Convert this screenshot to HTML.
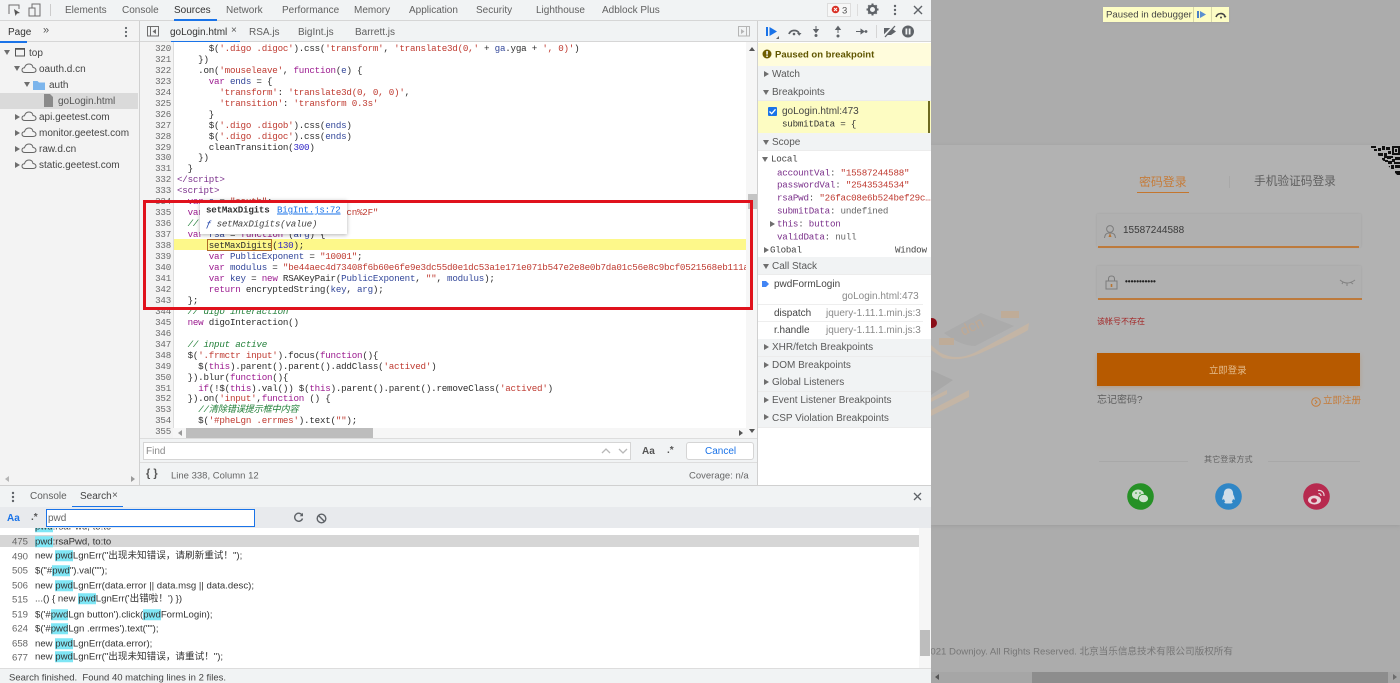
<!DOCTYPE html>
<html><head><meta charset="utf-8"><style>
html,body{margin:0;padding:0;width:1400px;height:683px;overflow:hidden;background:#acacac;font-family:"Liberation Sans","Noto Sans CJK SC",sans-serif;font-size:10px;color:#5a5a5a}
.a{position:absolute}
.t{position:absolute;white-space:nowrap;transform:translateY(calc(-50% + 1px));line-height:1.2}
.m{font-family:"Liberation Mono","Noto Sans CJK SC",monospace;font-size:9.2px;letter-spacing:-.22px}
.t.m{transform:translateY(-50%)}
.code{position:absolute;left:177px;top:33px;white-space:pre;line-height:10.96px;color:#2d2d2d}
.gut{position:absolute;left:140px;width:31px;top:33px;text-align:right;white-space:pre;line-height:10.96px;color:#6a6a6a}
.k{color:#9b1a8f}.s{color:#bf3a30}.v{color:#33479a}.n{color:#2a1fc4}.c{color:#23803a;font-style:italic}.g{color:#7a2f8a}
.tab{font-size:10px;color:#616161}
.h{position:absolute;left:758px;width:173px;background:#f1f3f4;height:17px;border-bottom:1px solid #ececec}
.ar{position:absolute;width:0;height:0;border-left:3px solid transparent;border-right:3px solid transparent;border-top:5px solid #6e6e6e}
.ar2{position:absolute;width:0;height:0;border-top:3px solid transparent;border-bottom:3px solid transparent;border-left:5px solid #6e6e6e}
mark{background:#7fe6f5;color:inherit}
.r{font-size:9.6px;color:#333}
.cj{letter-spacing:-.1px}
</style></head><body>

<!-- page behind -->
<div class="a" style="left:931px;top:0;width:469px;height:683px;background:#acacac;overflow:hidden">
 <div class="a" style="left:0;top:145px;width:469px;height:380px;background:#b2b2b2;box-shadow:0 1px 4px #9c9c9c"></div>
 <svg class="a" style="left:0;top:290px" width="110" height="140" viewBox="0 0 110 140">
  <path d="M0 55L8 62Q25 72 45 62L98 33L97 40Q90 45 50 63Q30 72 12 68L0 60Z" fill="#c4b5a5"/>
  <path d="M13 43L50 23L83 36L44 56Q30 56 13 43Z" fill="#ababab"/>
  <text x="32" y="46" transform="rotate(-25 32 46)" font-size="15" fill="#bfa994" font-family="Liberation Sans">dcn</text>
  <rect x="70" y="21" width="18" height="7" fill="#bfac98"/>
  <rect x="8" y="48" width="15" height="7" fill="#bfac98"/>
  <circle cx="1" cy="33" r="5" fill="#8a0e18"/>
  <path d="M0 80L22 90L0 105Z" fill="#a8a8a8"/>
  <path d="M0 108L16 100V104L0 112ZM0 120L38 100V107L0 126Z" fill="#c4b5a5"/>
 </svg>
 <svg class="a" style="left:438px;top:146px" width="31" height="32" viewBox="0 0 31 32">
  <defs><clipPath id="q"><path d="M0 0H31V32Z"/></clipPath></defs>
  <g clip-path="url(#q)" fill="#111"><rect x="0" y="0" width="31" height="32" fill="#b2b2b2"/>
  <path d="M2 0h5v2h-5zM9 2h3v3h-3zM13 0h3v4h-3zM9 7h5v3h-5zM15 7h3v5h-3zM19 5h3v3h-3zM18 10h4v3h-4zM13 12h3v3h-3zM19 15h4v3h-4zM23 13h3v3h-3zM22 19h3v4h-3zM26 19h5v3h-5zM26 25h5v4h-5zM22 25h2v2h-2zM19 20h2v2h-2zM5 3h3v2h-3zM17 1h4v3h-4zM22 10h2v2h-2zM26 11h5v3h-5zM25 16h6v2h-6zM16 14h3v2h-3z"/>
  <path d="M23 0h8v9h-8zM25 2v5h4V2z" fill-rule="evenodd"/><rect x="26" y="3" width="2" height="3"/></g>
 </svg>
 <div class="t" style="left:0;top:651px;width:302px;overflow:hidden;font-size:9.6px;color:#767676;direction:rtl;text-align:left"><span style="direction:ltr;unicode-bidi:bidi-override">2004-2021 Downjoy. All Rights Reserved. 北京当乐信息技术有限公司版权所有</span></div>
 <!-- paused -->
 <div class="a" style="left:172px;top:7px;width:126px;height:15px;background:#fdfdc4;box-shadow:0 1px 2px #a5a5a5"></div>
 <div class="t" style="left:175px;top:14px;font-size:9.6px;color:#444">Paused in debugger</div>
 <div class="a" style="left:262px;top:7px;width:1px;height:15px;background:#d8d8a8"></div>
 <div class="a" style="left:280px;top:7px;width:1px;height:15px;background:#d8d8a8"></div>
 <svg class="a" style="left:265px;top:10px" width="12" height="10"><rect x="1" y="1" width="2" height="7" fill="#4a7fc4"/><path d="M4 1L10 4.500L4 8Z" fill="#5a90d0"/></svg>
 <svg class="a" style="left:283px;top:10px" width="14" height="10" fill="none" stroke="#444" stroke-width="1.600"><path d="M2 7A5 5 0 0 1 11 6"/><path d="M9.500 6h3L11 8Z" fill="#444" stroke="none"/><circle cx="7" cy="7.500" r="1" fill="#444" stroke="none"/></svg>
 <!-- tabs -->
 <div class="t cj" style="left:208px;top:181px;font-size:12px;color:#c57c3a">密码登录</div>
 <div class="a" style="left:206px;top:192px;width:52px;height:1px;background:#c4762e"></div>
 <div class="a" style="left:298px;top:176px;width:1px;height:12px;background:#a8a8a8"></div>
 <div class="t" style="left:323px;top:181px;font-size:11.700px;color:#5f5f5f">手机验证码登录</div>
 <!-- input1 -->
 <div class="a" style="left:166px;top:214px;width:264px;height:33px;background:#b0b0b0;box-shadow:0 0 2px #a3a3a3"></div>
 <div class="a" style="left:167px;top:246px;width:261px;height:2px;background:#bd7a3c"></div>
 <svg class="a" style="left:172px;top:224px" width="14" height="15" fill="none" stroke="#7c7c7c"><circle cx="7" cy="5" r="3.400"/><path d="M1.500 14Q2 9 6 9H8Q12 9 12.500 14"/><path d="M7 9L5.500 13H8.500Z" fill="#b87430" stroke="none"/></svg>
 <div class="t" style="left:192px;top:230px;font-size:10px;color:#3a3a3a">15587244588</div>
 <!-- input2 -->
 <div class="a" style="left:166px;top:266px;width:264px;height:32px;background:#b0b0b0;box-shadow:0 0 2px #a3a3a3"></div>
 <div class="a" style="left:167px;top:298px;width:264px;height:1.500px;background:#bd7a3c"></div>
 <svg class="a" style="left:174px;top:275px" width="13" height="15" fill="none" stroke="#7c7c7c"><path d="M3.500 6V4Q3.500 1 6.500 1T9.500 4V6"/><rect x="1" y="6" width="11" height="8"/><rect x="5.700" y="9" width="1.600" height="3" fill="#b87430" stroke="none"/></svg>
 <div class="t" style="left:194px;top:281px;font-size:8px;color:#222;font-weight:bold">•••••••••••</div>
 <svg class="a" style="left:408px;top:279px" width="17" height="8" fill="none" stroke="#828282"><path d="M1 1Q8 7 16 1M4 3L3 5M8 4.500V7M12 3.500L14 5"/></svg>
 <div class="t" style="left:166px;top:321px;font-size:8px;color:#a32626">该帐号不存在</div>
 <!-- button -->
 <div class="a" style="left:166px;top:353px;width:263px;height:33px;background:#b75a00;box-shadow:0 2px 4px #b49f8a"></div>
 <div class="t" style="left:278px;top:369px;font-size:9.400px;color:#e4bc8c">立即登录</div>
 <div class="t" style="left:166px;top:400px;font-size:10px;color:#5f5f5f">忘记密码?</div>
 <svg class="a" style="left:380px;top:397px" width="10" height="10" fill="none" stroke="#c57c3a"><circle cx="5" cy="5" r="4.300"/><path d="M4 3L6 5L4 7"/></svg>
 <div class="t" style="left:392px;top:400px;font-size:9.500px;color:#c57c3a">立即注册</div>
 <!-- others -->
 <div class="a" style="left:168px;top:461px;width:89px;height:1px;background:#a8a8a8"></div>
 <div class="a" style="left:337px;top:461px;width:92px;height:1px;background:#a8a8a8"></div>
 <div class="t" style="left:273px;top:459px;font-size:8.100px;color:#656565">其它登录方式</div>
 <svg class="a" style="left:196px;top:483px" width="27" height="27"><circle cx="13.500" cy="13.500" r="13.300" fill="#269126"/><ellipse cx="11" cy="11.500" rx="6" ry="5" fill="#cfe3cf"/><ellipse cx="16.500" cy="15.500" rx="5" ry="4.200" fill="#cfe3cf" stroke="#269126" stroke-width=".8"/><circle cx="9" cy="10" r=".8" fill="#269126"/><circle cx="13" cy="10" r=".8" fill="#269126"/></svg>
 <svg class="a" style="left:284px;top:483px" width="27" height="27"><circle cx="13.500" cy="13.500" r="13.300" fill="#2f86c6"/><path d="M13.500 5.500C9.800 5.500 8.800 8.500 8.800 11.500C7.500 14 7 16 7.500 17L9 16C9.300 17.300 9.800 18 10.300 18.500C9 19 8.800 20.500 11.500 20.500H15.500C18.200 20.500 18 19 16.700 18.500C17.200 18 17.700 17.300 18 16L19.500 17C20 16 19.500 14 18.200 11.500C18.200 8.500 17.200 5.500 13.500 5.500Z" fill="#cfdde8"/></svg>
 <svg class="a" style="left:372px;top:483px" width="27" height="27"><circle cx="13.500" cy="13.500" r="13.300" fill="#b72a4f"/><ellipse cx="11.500" cy="17" rx="6.500" ry="4.500" fill="#e9d3d9"/><ellipse cx="11" cy="17.500" rx="3" ry="2.300" fill="#b72a4f"/><path d="M15 7.500A5 5 0 0 1 21 13M15.500 10.500A2.500 2.500 0 0 1 18 13" fill="none" stroke="#e9d3d9" stroke-width="1.200"/></svg>
 <!-- scrollbar -->
 <div class="a" style="left:0;top:672px;width:469px;height:11px;background:#a6a6a6"></div>
 <div class="a" style="left:101px;top:672px;width:356px;height:11px;background:#8d8d8d"></div>
 <div class="a" style="left:4px;top:674px;width:0;height:0;border:3px solid transparent;border-right:4px solid #555;border-left:0"></div>
 <div class="a" style="left:462px;top:674px;width:0;height:0;border:3px solid transparent;border-left:4px solid #6c6c6c;border-right:0"></div>
</div>

<!-- devtools -->
<div class="a" style="left:0;top:0;width:931px;height:683px;background:#fff;overflow:hidden">
 <!-- main toolbar -->
 <div class="a" style="left:0;top:0;width:931px;height:20px;background:#f1f3f4;border-bottom:1px solid #d6d6d6"></div>
 <svg class="a" style="left:7px;top:3px" width="36" height="14" fill="none" stroke="#6e6e6e"><path d="M2 11V2H12V6"/><path d="M7 6L8.500 13L10 10.500L13 10Z" fill="#555" stroke="none"/><rect x="22" y="5" width="6" height="8"/><path d="M25 5V1H33V13H28"/></svg>
 <div class="a" style="left:50px;top:4px;width:1px;height:12px;background:#ccc"></div>
 <span class="t tab" style="left:65px;top:10px">Elements</span><span class="t tab" style="left:122px;top:10px">Console</span><span class="t tab" style="left:174px;top:10px;color:#333">Sources</span><span class="t tab" style="left:226px;top:10px">Network</span><span class="t tab" style="left:282px;top:10px">Performance</span><span class="t tab" style="left:354px;top:10px">Memory</span><span class="t tab" style="left:409px;top:10px">Application</span><span class="t tab" style="left:476px;top:10px">Security</span><span class="t tab" style="left:536px;top:10px">Lighthouse</span><span class="t tab" style="left:602px;top:10px">Adblock Plus</span>
 <div class="a" style="left:174px;top:19px;width:43px;height:2px;background:#1a73e8"></div>
 <div class="a" style="left:827px;top:3px;width:24px;height:14px;border:1px solid #ddd;box-sizing:border-box;background:#f7f7f7"></div>
 <svg class="a" style="left:831px;top:5px" width="9" height="9"><circle cx="4.500" cy="4.500" r="3.800" fill="#d93025"/><path d="M3 3L6 6M6 3L3 6" stroke="#fff"/></svg>
 <span class="t" style="left:842px;top:10px;font-size:9.500px;color:#555">3</span>
 <div class="a" style="left:857px;top:4px;width:1px;height:12px;background:#ddd"></div>
 <svg class="a" style="left:866px;top:3px" width="13" height="13"><circle cx="6.500" cy="6.500" r="3.700" fill="none" stroke="#5f6368" stroke-width="2.400"/><path d="M6.500 .5V3M6.500 10V12.500M.5 6.500H3M10 6.500H12.500M2.300 2.300L4 4M9 9L10.700 10.700M2.300 10.700L4 9M9 4L10.700 2.300" stroke="#5f6368" stroke-width="2"/></svg>
 <svg class="a" style="left:893px;top:4px" width="4" height="12" fill="#5f6368"><circle cx="2" cy="2" r="1.200"/><circle cx="2" cy="6" r="1.200"/><circle cx="2" cy="10" r="1.200"/></svg>
 <svg class="a" style="left:913px;top:5px" width="10" height="10" stroke="#5f6368" stroke-width="1.400"><path d="M1 1L9 9M9 1L1 9"/></svg>

 <!-- left nav -->
 <div class="a" style="left:0;top:21px;width:139px;height:464px;background:#f3f3f3;border-right:1px solid #d0d0d0"></div>
 <span class="t" style="left:8px;top:31.500px;font-size:10px;color:#333">Page</span>
 <span class="t" style="left:43px;top:30px;font-size:11px;color:#555">»</span>
 <svg class="a" style="left:124px;top:26px" width="4" height="12" fill="#5f6368"><circle cx="2" cy="2" r="1.100"/><circle cx="2" cy="6" r="1.100"/><circle cx="2" cy="10" r="1.100"/></svg>
 <div class="a" style="left:0;top:41px;width:139px;height:1px;background:#d6d6d6"></div>
 <div class="a" style="left:0;top:41px;width:27px;height:2px;background:#1a73e8"></div>
 <div class="a" style="left:0;top:93px;width:138px;height:16px;background:#dadada"></div>
 <div class="ar" style="left:4px;top:50px"></div>
 <svg class="a" style="left:15px;top:47px" width="11" height="11" fill="none" stroke="#555"><rect x=".5" y="1.500" width="9" height="7.500" stroke-width="1"/><path d="M.5 2H9.500" stroke-width="1.500"/></svg>
 <span class="t" style="left:29px;top:52.500px;color:#444">top</span>
 <div class="ar" style="left:14px;top:66px"></div>
 <svg class="a" style="left:21px;top:63px" width="16" height="11" fill="none" stroke="#666"><path d="M4 9.500Q1 9.500 1 7Q1 5 3.500 4.800Q4.500 1 8 1Q11.500 1 12 4.500Q15 5 15 7.300Q15 9.500 12 9.500Z"/></svg>
 <span class="t" style="left:39px;top:68.500px;color:#444">oauth.d.cn</span>
 <div class="ar" style="left:24px;top:82px"></div>
 <svg class="a" style="left:33px;top:80px" width="12" height="10"><path d="M0 1H4.500L6 2.500H12V10H0Z" fill="#7cb5ec"/></svg>
 <span class="t" style="left:49px;top:84.500px;color:#444">auth</span>
 <svg class="a" style="left:44px;top:94px" width="9" height="13"><path d="M0 0H6L9 3V13H0Z" fill="#8a8a8a"/></svg>
 <span class="t" style="left:58px;top:100.500px;color:#555">goLogin.html</span>
 <div class="ar2" style="left:15px;top:114px"></div>
 <svg class="a" style="left:21px;top:111px" width="16" height="11" fill="none" stroke="#666"><path d="M4 9.500Q1 9.500 1 7Q1 5 3.500 4.800Q4.500 1 8 1Q11.500 1 12 4.500Q15 5 15 7.300Q15 9.500 12 9.500Z"/></svg>
 <span class="t" style="left:39px;top:116.500px;color:#444">api.geetest.com</span>
 <div class="ar2" style="left:15px;top:130px"></div>
 <svg class="a" style="left:21px;top:127px" width="16" height="11" fill="none" stroke="#666"><path d="M4 9.500Q1 9.500 1 7Q1 5 3.500 4.800Q4.500 1 8 1Q11.500 1 12 4.500Q15 5 15 7.300Q15 9.500 12 9.500Z"/></svg>
 <span class="t" style="left:39px;top:132.500px;color:#444">monitor.geetest.com</span>
 <div class="ar2" style="left:15px;top:146px"></div>
 <svg class="a" style="left:21px;top:143px" width="16" height="11" fill="none" stroke="#666"><path d="M4 9.500Q1 9.500 1 7Q1 5 3.500 4.800Q4.500 1 8 1Q11.500 1 12 4.500Q15 5 15 7.300Q15 9.500 12 9.500Z"/></svg>
 <span class="t" style="left:39px;top:148.500px;color:#444">raw.d.cn</span>
 <div class="ar2" style="left:15px;top:162px"></div>
 <svg class="a" style="left:21px;top:159px" width="16" height="11" fill="none" stroke="#666"><path d="M4 9.500Q1 9.500 1 7Q1 5 3.500 4.800Q4.500 1 8 1Q11.500 1 12 4.500Q15 5 15 7.300Q15 9.500 12 9.500Z"/></svg>
 <span class="t" style="left:39px;top:164.500px;color:#444">static.geetest.com</span>
 <div class="a" style="left:5px;top:476px;width:0;height:0;border:3px solid transparent;border-right:4px solid #b5b5b5;border-left:0"></div>
 <div class="a" style="left:131px;top:476px;width:0;height:0;border:3px solid transparent;border-left:4px solid #9a9a9a;border-right:0"></div>

 <!-- editor tabs -->
 <div class="a" style="left:140px;top:21px;width:618px;height:20px;background:#f1f3f4;border-bottom:1px solid #d6d6d6"></div>
 <svg class="a" style="left:147px;top:26px" width="12" height="11" fill="none" stroke="#6e6e6e"><rect x=".5" y=".5" width="11" height="9.500"/><path d="M3.500 .5V10"/><path d="M9 3V8L5.500 5.500Z" fill="#6e6e6e" stroke="none"/></svg>
 <span class="t" style="left:170px;top:31.500px;color:#333">goLogin.html</span>
 <span class="t" style="left:231px;top:29.500px;font-size:10px;color:#555">×</span>
 <div class="a" style="left:171px;top:41px;width:69px;height:2px;background:#1a73e8"></div>
 <span class="t" style="left:249px;top:31.500px;color:#5f5f5f">RSA.js</span><span class="t" style="left:298px;top:31.500px;color:#5f5f5f">BigInt.js</span><span class="t" style="left:355px;top:31.500px;color:#5f5f5f">Barrett.js</span>
 <svg class="a" style="left:738px;top:26px" width="12" height="11" fill="none" stroke="#b5b5b5"><rect x=".5" y=".5" width="11" height="9.500"/><path d="M8.500 .5V10"/><path d="M3 3V8L6.500 5.500Z" fill="#b5b5b5" stroke="none"/></svg>

 <!-- editor -->
 <div class="a" style="left:140px;top:42px;width:606px;height:396px;background:#fff;overflow:hidden">
  <div class="a" style="left:0;top:0;width:33px;height:396px;background:#f3f3f3;border-right:1px solid #ddd"></div>
  <div class="a" style="left:34px;top:197px;width:572px;height:11px;background:#fdf88a"></div>
  <div style="position:absolute;left:-140px;top:-42px;width:886px;height:440px">
  <div class="gut m">319
320
321
322
323
324
325
326
327
328
329
330
331
332
333
334
335
336
337
338
339
340
341
342
343
344
345
346
347
348
349
350
351
352
353
354
355</div>
  <div class="code m">      $(<span class="s">'.digo .digob'</span>).css(<span class="s">'transform'</span>, <span class="s">'translate3d('</span> + <span class="v">ga</span>.xga + <span class="s">', 0, 0)'</span>)
      $(<span class="s">'.digo .digoc'</span>).css(<span class="s">'transform'</span>, <span class="s">'translate3d(0,'</span> + <span class="v">ga</span>.yga + <span class="s">', 0)'</span>)
    })
    .on(<span class="s">'mouseleave'</span>, <span class="k">function</span>(<span class="v">e</span>) {
      <span class="k">var</span> <span class="v">ends</span> = {
        <span class="s">'transform'</span>: <span class="s">'translate3d(0, 0, 0)'</span>,
        <span class="s">'transition'</span>: <span class="s">'transform 0.3s'</span>
      }
      $(<span class="s">'.digo .digob'</span>).css(<span class="v">ends</span>)
      $(<span class="s">'.digo .digoc'</span>).css(<span class="v">ends</span>)
      cleanTransition(<span class="n">300</span>)
    })
  }
<span class="g">&lt;/script&gt;</span>
<span class="g">&lt;script&gt;</span>
  <span class="k">var</span> <span class="v">a</span> = <span class="s">"oauth"</span>;
  <span class="k">var</span> <span class="v">b</span> = <span class="s">"https%3A%2F%2Fauth.d.cn%2F"</span>
  <span class="c">// rsa</span>
  <span class="k">var</span> <span class="v">rsa</span> = <span class="k">function</span> (<span class="v">arg</span>) {
      setMaxDigits(<span class="n">130</span>);
      <span class="k">var</span> <span class="v">PublicExponent</span> = <span class="s">"10001"</span>;
      <span class="k">var</span> <span class="v">modulus</span> = <span class="s">"be44aec4d73408f6b60e6fe9e3dc55d0e1dc53a1e171e071b547e2e8e0b7da01c56e8c9bcf0521568eb111a"</span>
      <span class="k">var</span> <span class="v">key</span> = <span class="k">new</span> RSAKeyPair(<span class="v">PublicExponent</span>, <span class="s">""</span>, <span class="v">modulus</span>);
      <span class="k">return</span> encryptedString(<span class="v">key</span>, <span class="v">arg</span>);
  };
  <span class="c">// digo interaction</span>
  <span class="k">new</span> digoInteraction()

  <span class="c">// input active</span>
  $(<span class="s">'.frmctr input'</span>).focus(<span class="k">function</span>(){
    $(<span class="k">this</span>).parent().parent().addClass(<span class="s">'actived'</span>)
  }).blur(<span class="k">function</span>(){
    <span class="k">if</span>(!$(<span class="k">this</span>).val()) $(<span class="k">this</span>).parent().parent().removeClass(<span class="s">'actived'</span>)
  }).on(<span class="s">'input'</span>,<span class="k">function</span> () {
    <span class="c">//清除错误提示框中内容</span>
    $(<span class="s">'#pheLgn .errmes'</span>).text(<span class="s">""</span>);</div>
  <div class="a" style="left:207px;top:239px;width:65px;height:12px;border:1px solid #b06a28;box-sizing:border-box"></div>
  </div>
 </div>
 <!-- editor scrollbars -->
 <div class="a" style="left:746px;top:42px;width:12px;height:396px;background:#f6f6f6"></div>
 <div class="a" style="left:748px;top:194px;width:9px;height:15px;background:#c4c4c4"></div>
 <div class="a" style="left:749px;top:47px;width:0;height:0;border:3px solid transparent;border-bottom:4px solid #555;border-top:0"></div>
 <div class="a" style="left:749px;top:429px;width:0;height:0;border:3px solid transparent;border-top:4px solid #555;border-bottom:0"></div>
 <div class="a" style="left:173px;top:428px;width:573px;height:10px;background:#f6f6f6"></div>
 <div class="a" style="left:186px;top:428px;width:187px;height:10px;background:#bdbdbd"></div>
 <div class="a" style="left:178px;top:430px;width:0;height:0;border:3px solid transparent;border-right:4px solid #999;border-left:0"></div>
 <div class="a" style="left:739px;top:430px;width:0;height:0;border:3px solid transparent;border-left:4px solid #555;border-right:0"></div>

 <!-- tooltip -->
 <div class="a" style="left:200px;top:200px;width:147px;height:34px;background:#fff;box-shadow:0 1px 4px rgba(0,0,0,.3)"></div>
 <span class="t m" style="left:206px;top:210px;font-weight:bold;color:#333">setMaxDigits</span>
 <span class="t m" style="left:277px;top:210px;color:#1a73e8;text-decoration:underline">BigInt.js:72</span>
 <span class="t m" style="left:206px;top:224px;font-style:italic;color:#444"><span style="color:#1c3fa8">ƒ</span> setMaxDigits(value)</span>

 <!-- find bar -->
 <div class="a" style="left:140px;top:438px;width:618px;height:24px;background:#f1f3f4;border-top:1px solid #ddd;box-sizing:border-box"></div>
 <div class="a" style="left:143px;top:442px;width:488px;height:18px;background:#fff;border:1px solid #d5d5d5;box-sizing:border-box"></div>
 <span class="t" style="left:146px;top:450.500px;color:#8a8a8a">Find</span>
 <svg class="a" style="left:601px;top:447px" width="28" height="8" fill="none" stroke="#b8b8b8" stroke-width="1.300"><path d="M1 6L5 2L9 6M18 2L22 6L26 2"/></svg>
 <span class="t" style="left:642px;top:451px;font-size:10px;font-weight:bold;color:#555">Aa</span>
 <span class="t" style="left:667px;top:450px;font-size:10px;font-weight:bold;color:#555">.*</span>
 <div class="a" style="left:686px;top:442px;width:68px;height:18px;background:#fff;border:1px solid #d5d5d5;border-radius:3px;box-sizing:border-box"></div>
 <span class="t" style="left:705px;top:451px;color:#1a73e8">Cancel</span>
 <!-- status -->
 <div class="a" style="left:140px;top:462px;width:618px;height:23px;background:#f1f3f4;border-top:1px solid #ddd;box-sizing:border-box"></div>
 <span class="t" style="left:146px;top:472.500px;font-size:11px;font-weight:bold;color:#555">{ }</span>
 <span class="t" style="left:171px;top:475px;font-size:9.500px;color:#666">Line 338, Column 12</span>
 <span class="t" style="left:689px;top:475px;font-size:9.500px;color:#666">Coverage: n/a</span>

 <!-- sidebar -->
 <div class="a" style="left:757px;top:21px;width:174px;height:464px;background:#fff;border-left:1px solid #d0d0d0;box-sizing:border-box"></div>
 <div class="a" style="left:758px;top:21px;width:173px;height:21px;background:#f1f3f4;border-bottom:1px solid #d6d6d6;box-sizing:border-box"></div>
 <svg class="a" style="left:765px;top:24px" width="160" height="16">
  <rect x="1" y="3" width="2" height="9" fill="#1a73e8"/><path d="M4.500 3L12 7.500L4.500 12Z" fill="#1a73e8"/><path d="M11 15H14V12Z" fill="#666"/>
  <path d="M24 10A5.500 5 0 0 1 34 9" fill="none" stroke="#5f6368" stroke-width="1.800"/><path d="M32 9h4.500L34.200 11.800Z" fill="#5f6368"/><circle cx="29" cy="10" r="1.300" fill="#5f6368"/>
  <path d="M51 2V7M48.800 5.500H53.200L51 8.500Z" fill="#5f6368" stroke="#5f6368"/><circle cx="51" cy="11.500" r="1.500" fill="#5f6368"/>
  <path d="M73 5V9M70.800 5.500H75.200L73 2.500Z" fill="#5f6368" stroke="#5f6368"/><circle cx="73" cy="12" r="1.500" fill="#5f6368"/>
  <path d="M91 7.500H97M96 5.300V9.700L99 7.500Z" fill="#5f6368" stroke="#5f6368"/><circle cx="101" cy="7.500" r="1.400" fill="#5f6368"/>
  <rect x="111" y="1" width="1" height="13" fill="#d5d5d5"/>
  <path d="M119 4H126L131 7.500L126 11H119Z" fill="#5f6368"/><path d="M118 13L130 1" stroke="#f1f3f4" stroke-width="2.500"/><path d="M120 13L130 2" stroke="#5f6368" stroke-width="1.300"/>
  <circle cx="143" cy="7.500" r="6" fill="#5f6368"/><rect x="140.500" y="4.500" width="1.800" height="6" fill="#f1f3f4"/><rect x="143.700" y="4.500" width="1.800" height="6" fill="#f1f3f4"/>
 </svg>
 <div class="a" style="left:758px;top:43px;width:173px;height:23px;background:#fffcdc"></div>
 <svg class="a" style="left:762px;top:49px" width="10" height="10"><circle cx="5" cy="5" r="4.500" fill="#6d5d00"/><rect x="4.300" y="2" width="1.500" height="3.600" fill="#fff"/><rect x="4.300" y="6.500" width="1.500" height="1.500" fill="#fff"/></svg>
 <span class="t" style="left:775px;top:54px;font-size:9.500px;font-weight:bold;color:#5f5500">Paused on breakpoint</span>

 <div class="h" style="top:66px"></div><div class="ar2" style="left:764px;top:71px"></div><span class="t" style="left:772px;top:74px">Watch</span>
 <div class="h" style="top:83px"></div><div class="ar" style="left:763px;top:90px"></div><span class="t" style="left:772px;top:92px">Breakpoints</span>
 <div class="a" style="left:758px;top:101px;width:173px;height:32px;background:#fdfcc2"></div>
 <div class="a" style="left:928px;top:101px;width:2px;height:32px;background:#6e6a20"></div>
 <div class="a" style="left:768px;top:107px;width:9px;height:9px;background:#1a73e8;border-radius:1px"></div>
 <svg class="a" style="left:768px;top:107px" width="9" height="9" fill="none" stroke="#fff" stroke-width="1.300"><path d="M1.500 4.500L3.700 6.700L7.500 2.300"/></svg>
 <span class="t" style="left:782px;top:111px;color:#444">goLogin.html:473</span>
 <span class="t m" style="left:782px;top:124px;color:#333">submitData = {</span>
 <div class="h" style="top:133px"></div><div class="ar" style="left:763px;top:140px"></div><span class="t" style="left:772px;top:141.500px">Scope</span>
 <div class="ar" style="left:762px;top:157px"></div><span class="t m" style="left:771px;top:159px;color:#444">Local</span>
 <span class="t m" style="left:777px;top:172.500px"><span class="g">accountVal</span>: <span class="s">"15587244588"</span></span>
 <span class="t m" style="left:777px;top:185px"><span class="g">passwordVal</span>: <span class="s">"2543534534"</span></span>
 <span class="t m" style="left:777px;top:198px;width:154px;overflow:hidden;text-overflow:ellipsis"><span class="g">rsaPwd</span>: <span class="s">"26fac08e6b524bef29c…</span></span>
 <span class="t m" style="left:777px;top:211px"><span class="g">submitData</span>: <span style="color:#666">undefined</span></span>
 <div class="ar2" style="left:770px;top:221px"></div>
 <span class="t m" style="left:777px;top:224px"><span class="g">this</span>: <span class="g">button</span></span>
 <span class="t m" style="left:777px;top:237px"><span class="g">validData</span>: <span style="color:#666">null</span></span>
 <div class="ar2" style="left:764px;top:247px"></div>
 <span class="t m" style="left:770px;top:250px;color:#444">Global</span>
 <span class="t m" style="left:895px;top:250px;color:#444">Window</span>
 <div class="h" style="top:257px"></div><div class="ar" style="left:763px;top:264px"></div><span class="t" style="left:772px;top:265.500px">Call Stack</span>
 <svg class="a" style="left:762px;top:281px" width="7" height="6"><path d="M0 0H4L7 3L4 6H0Z" fill="#4285f4"/></svg>
 <span class="t" style="left:774px;top:284px;color:#444">pwdFormLogin</span>
 <span class="t" style="left:842px;top:295.500px;color:#8a8a8a">goLogin.html:473</span>
 <div class="a" style="left:758px;top:304px;width:165px;height:1px;background:#eee"></div>
 <span class="t" style="left:774px;top:312.500px;color:#444">dispatch</span>
 <span class="t" style="left:826px;top:312.500px;color:#8a8a8a">jquery-1.11.1.min.js:3</span>
 <div class="a" style="left:758px;top:321px;width:165px;height:1px;background:#eee"></div>
 <span class="t" style="left:774px;top:329.500px;color:#444">r.handle</span>
 <span class="t" style="left:826px;top:329.500px;color:#8a8a8a">jquery-1.11.1.min.js:3</span>
 <div class="h" style="top:339px"></div><div class="ar2" style="left:764px;top:344px"></div><span class="t" style="left:772px;top:346.500px">XHR/fetch Breakpoints</span>
 <div class="h" style="top:357px"></div><div class="ar2" style="left:764px;top:362px"></div><span class="t" style="left:772px;top:364.500px">DOM Breakpoints</span>
 <div class="h" style="top:374px"></div><div class="ar2" style="left:764px;top:379px"></div><span class="t" style="left:772px;top:382px">Global Listeners</span>
 <div class="h" style="top:392px"></div><div class="ar2" style="left:764px;top:397px"></div><span class="t" style="left:772px;top:399.500px">Event Listener Breakpoints</span>
 <div class="h" style="top:409px;height:18px"></div><div class="ar2" style="left:764px;top:414px"></div><span class="t" style="left:772px;top:417.500px">CSP Violation Breakpoints</span>

 <!-- drawer -->
 <div class="a" style="left:0;top:485px;width:931px;height:22px;background:#f1f3f4;border-top:1px solid #d0d0d0;box-sizing:border-box"></div>
 <svg class="a" style="left:11px;top:491px" width="4" height="12" fill="#5f6368"><circle cx="2" cy="2" r="1.200"/><circle cx="2" cy="6" r="1.200"/><circle cx="2" cy="10" r="1.200"/></svg>
 <span class="t" style="left:30px;top:496px;color:#5f5f5f">Console</span>
 <span class="t" style="left:80px;top:496px;color:#444">Search</span>
 <span class="t" style="left:112px;top:494.500px;font-size:10px;color:#555">×</span>
 <div class="a" style="left:72px;top:506px;width:51px;height:2px;background:#1a73e8"></div>
 <svg class="a" style="left:913px;top:492px" width="9" height="9" stroke="#5f6368" stroke-width="1.300"><path d="M1 1L8 8M8 1L1 8"/></svg>
 <div class="a" style="left:0;top:507px;width:931px;height:21px;background:#e8eaed"></div>
 <span class="t" style="left:7px;top:518px;font-size:10px;font-weight:bold;color:#1a73e8">Aa</span>
 <span class="t" style="left:31px;top:517px;font-size:10px;font-weight:bold;color:#555">.*</span>
 <div class="a" style="left:46px;top:509px;width:209px;height:18px;background:#fff;border:1px solid #1a73e8;box-sizing:border-box"></div>
 <span class="t" style="left:48px;top:518px;color:#666">pwd</span>
 <svg class="a" style="left:293px;top:512px" width="11" height="11" fill="none" stroke="#5f6368" stroke-width="1.400"><path d="M9.300 3.500A4 4 0 1 0 9.500 6.500"/><path d="M10 .8V4.300H6.700" fill="#5f6368" stroke="none"/></svg>
 <svg class="a" style="left:316px;top:513px" width="11" height="11" fill="none" stroke="#5f6368" stroke-width="1.400"><circle cx="5.500" cy="5.500" r="4.300"/><path d="M2.500 2.500L8.500 8.500"/></svg>
 <div class="a" style="left:0;top:528px;width:919px;height:140px;background:#fff;overflow:hidden">
  <span class="t r" style="left:35px;top:-2px"><mark>pwd</mark>:rsaPwd, to:to</span>
  <div class="a" style="left:0;top:7px;width:919px;height:12px;background:#d6d6d6"></div>
  <span class="t r" style="left:12px;top:13px;color:#666">475</span><span class="t r" style="left:35px;top:13px"><mark>pwd</mark>:rsaPwd, to:to</span>
  <span class="t r" style="left:12px;top:28px;color:#666">490</span><span class="t r" style="left:35px;top:27px">new <mark>pwd</mark>LgnErr("出现未知错误，请刷新重试！");</span>
  <span class="t r" style="left:12px;top:42px;color:#666">505</span><span class="t r" style="left:35px;top:42px">$("#<mark>pwd</mark>").val("");</span>
  <span class="t r" style="left:12px;top:57px;color:#666">506</span><span class="t r" style="left:35px;top:57px">new <mark>pwd</mark>LgnErr(data.error || data.msg || data.desc);</span>
  <span class="t r" style="left:12px;top:71px;color:#666">515</span><span class="t r" style="left:35px;top:70px">...() { new <mark>pwd</mark>LgnErr('出错啦！') })</span>
  <span class="t r" style="left:12px;top:86px;color:#666">519</span><span class="t r" style="left:35px;top:86px">$('#<mark>pwd</mark>Lgn button').click(<mark>pwd</mark>FormLogin);</span>
  <span class="t r" style="left:12px;top:100px;color:#666">624</span><span class="t r" style="left:35px;top:100px">$('#<mark>pwd</mark>Lgn .errmes').text("");</span>
  <span class="t r" style="left:12px;top:115px;color:#666">658</span><span class="t r" style="left:35px;top:115px">new <mark>pwd</mark>LgnErr(data.error);</span>
  <span class="t r" style="left:12px;top:129px;color:#666">677</span><span class="t r" style="left:35px;top:128px">new <mark>pwd</mark>LgnErr("出现未知错误，请重试！");</span>
 </div>
 <div class="a" style="left:919px;top:528px;width:12px;height:140px;background:#f6f6f6"></div>
 <div class="a" style="left:920px;top:630px;width:10px;height:26px;background:#bdbdbd"></div>
 <div class="a" style="left:0;top:668px;width:931px;height:15px;background:#f1f3f4;border-top:1px solid #ddd;box-sizing:border-box"></div>
 <span class="t" style="left:9px;top:676.500px;font-size:9.500px;color:#444">Search finished.&nbsp; Found 40 matching lines in 2 files.</span>

 <!-- red rect -->
 <div class="a" style="left:143px;top:200px;width:610px;height:110px;border:3px solid #e0121c;box-sizing:border-box"></div>
</div>
</body></html>
